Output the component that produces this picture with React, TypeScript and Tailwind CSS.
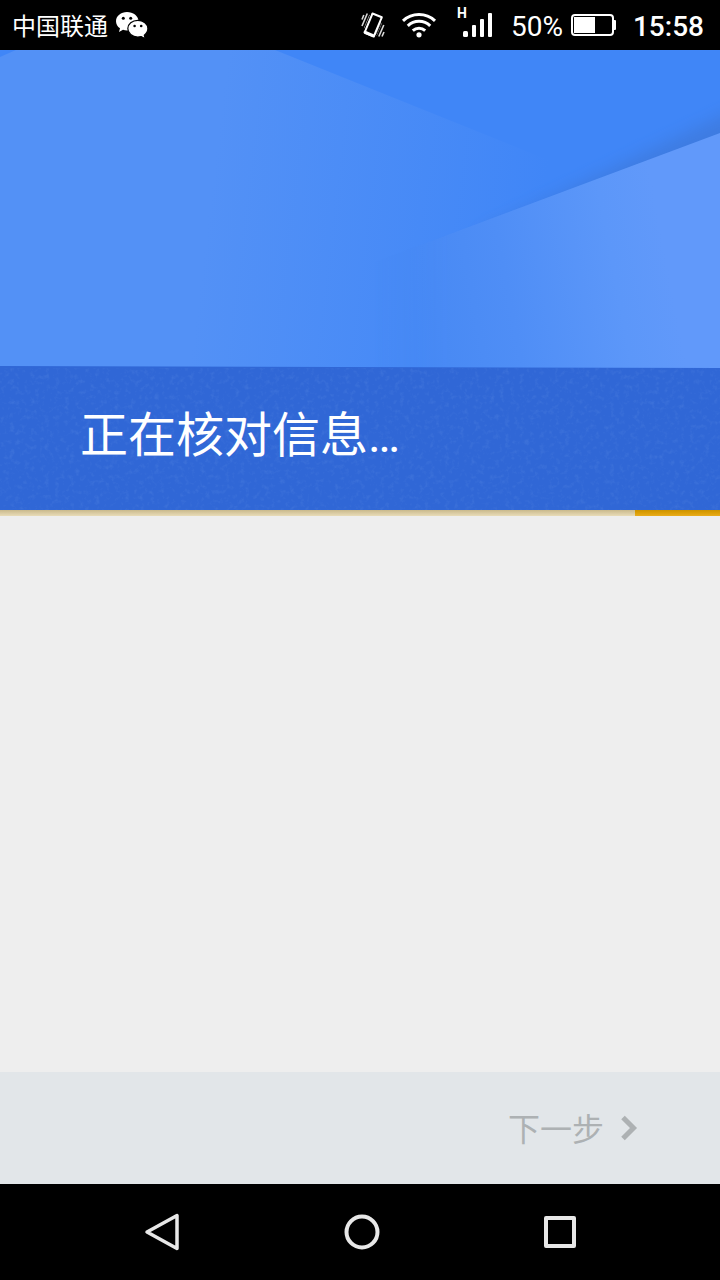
import { ReactNode } from "react";

function WeChatIcon() {
  return (
    <svg viewBox="0 0 32 28" className="h-7 w-8" aria-hidden="true">
      <path
        fill="#fff"
        d="M11 1C5 1 0 5 0 10.200c0 2.900 1.500 5.400 4 7.100L3 21l4-2.200c1.300.4 2.600.6 4 .6C17 19.400 22.500 15.500 22.500 10.200S17 1 11 1z"
      />
      <path
        fill="#fff"
        stroke="#000"
        strokeWidth="1.200"
        d="M21.800 9.400c-5.600 0-10 3.600-10 8.200s4.400 8.500 10 8.500c1.200 0 2.300-.2 3.400-.5l4.100 2.200-1-3.600c2.200-1.600 3.600-3.900 3.600-6.600 0-4.600-4.500-8.200-10.100-8.200z"
      />
      <circle cx="7.300" cy="7.200" r="1.500" />
      <circle cx="14.700" cy="7.200" r="1.500" />
      <circle cx="18.600" cy="15" r="1.300" />
      <circle cx="25.200" cy="15" r="1.300" />
    </svg>
  );
}

function VibrateIcon() {
  return (
    <svg viewBox="0 0 24 28" className="h-7 w-6" fill="none" stroke="#fff" aria-hidden="true">
      <path strokeWidth="2" strokeLinejoin="round" d="M11.500 2.500 20.800 6.300 12.800 25.500 3.500 21.500z" />
      <path strokeWidth="3" strokeLinecap="round" d="M4.500 21.500l7.500 3.200" />
      <path strokeWidth="1.600" d="M1 8.500 2.800 4M1 15 6.300 2.500M3.600 17.500 9 4M15 24.500l5.500-13M17.800 25.500l5-11.500M21 25.500l2-4.500" opacity="0.850" />
      <path stroke="#000" strokeWidth="1" d="M9.600 3.200 2.800 19.500M21.800 8.500 14.900 25" />
    </svg>
  );
}

function WifiIcon() {
  return (
    <svg viewBox="0 0 36 28" className="h-7 w-9" fill="none" stroke="#fff" aria-hidden="true">
      <path strokeWidth="3" d="M2 9.800c9-8.400 23-8.400 32 0" />
      <path strokeWidth="3" d="M6.800 14.800c6.300-6 16.100-6 22.400 0" />
      <path strokeWidth="3" d="M11.800 19.600c3.600-3.300 8.800-3.300 12.400 0" />
      <circle cx="18" cy="23.800" r="2.600" fill="#fff" stroke="none" />
    </svg>
  );
}

function SignalIcon() {
  return (
    <svg viewBox="0 0 32 28" className="h-7 w-8" fill="#fff" aria-hidden="true">
      <rect x="0" y="20" width="5" height="6" rx="1.500" />
      <rect x="9" y="14" width="4" height="12" rx="1" />
      <rect x="17" y="8" width="4" height="18" rx="1" />
      <rect x="25" y="2" width="4" height="24" rx="1" />
    </svg>
  );
}

function BatteryIcon() {
  return (
    <svg viewBox="0 0 46 24" className="h-6 w-[46px]" aria-hidden="true">
      <rect x="1" y="2" width="41" height="20" rx="3" fill="none" stroke="#fff" strokeWidth="2" />
      <rect x="3" y="4" width="21" height="16" fill="#fff" />
      <path d="M43 7h1a1 1 0 0 1 1 1v8a1 1 0 0 1-1 1h-1z" fill="#fff" />
    </svg>
  );
}

function StatusBar() {
  return (
    <div className="flex h-[50px] items-center justify-between bg-black pl-3 pr-4 text-white">
      <div className="flex items-center gap-2">
        <span className="pt-1 text-2xl">中国联通</span>
        <WeChatIcon />
      </div>
      <div className="flex items-center">
        <VibrateIcon />
        <div className="ml-4">
          <WifiIcon />
        </div>
        <div className="ml-5 flex items-center">
          <span className="-mr-1 pb-6 text-sm leading-none font-bold">H</span>
          <SignalIcon />
        </div>
        <span className="mr-2 ml-4 pt-1 text-[28px]">50%</span>
        <BatteryIcon />
        <span className="ml-4 pt-1 text-[28px] font-medium">15:58</span>
      </div>
    </div>
  );
}

/** Folded-paper artwork behind the setup title. */
function HeaderArt() {
  return (
    <svg
      viewBox="0 0 720 460"
      preserveAspectRatio="none"
      className="absolute inset-0 h-full w-full"
      aria-hidden="true"
    >
      <defs>
        <linearGradient id="leftFold" gradientUnits="userSpaceOnUse" x1="210" y1="150" x2="540" y2="190">
          <stop offset="0" stopColor="#5391f6" />
          <stop offset="1" stopColor="#5391f6" stopOpacity="0" />
        </linearGradient>
        <linearGradient id="rightFold" gradientUnits="userSpaceOnUse" x1="400" y1="250" x2="665" y2="200">
          <stop offset="0" stopColor="#4688f3" />
          <stop offset="0.400" stopColor="#4f8ef6" />
          <stop offset="0.800" stopColor="#5c97f9" />
          <stop offset="1" stopColor="#6199fa" />
        </linearGradient>
        <linearGradient id="rightEdge" gradientUnits="userSpaceOnUse" x1="375" y1="0" x2="450" y2="0">
          <stop offset="0" stopColor="#000" />
          <stop offset="1" stopColor="#fff" />
        </linearGradient>
        <mask id="rightMask" maskUnits="userSpaceOnUse" x="0" y="0" width="720" height="460">
          <rect width="720" height="460" fill="url(#rightEdge)" />
        </mask>
        <filter id="soft" x="-20%" y="-50%" width="140%" height="200%">
          <feGaussianBlur stdDeviation="8" />
        </filter>
        <filter id="grain" x="0" y="0" width="100%" height="100%">
          <feTurbulence type="fractalNoise" baseFrequency="0.2" numOctaves="3" seed="4" />
          <feColorMatrix values="0 0 0 0 0.3  0 0 0 0 0.5  0 0 0 0 0.9  1.200 0 0 0 -0.6" />
        </filter>
      </defs>
      <rect width="720" height="460" fill="#4086f7" />
      <path d="M0 7 16 0H275L700 171V317H0z" fill="url(#leftFold)" />
      <path d="M480 182 780 38V130L480 200z" fill="#3a66b4" opacity="0.320" filter="url(#soft)" />
      <path d="M720 83 370 214V320H720z" fill="url(#rightFold)" mask="url(#rightMask)" />
      <path d="M0 316 720 318V460H0z" fill="#3067d6" />
      <rect y="318" width="720" height="142" filter="url(#grain)" opacity="0.250" />
    </svg>
  );
}

function NavButton({ label, children }: { label: string; children: ReactNode }) {
  return (
    <button type="button" aria-label={label} className="flex h-12 w-12 items-center justify-center">
      <svg viewBox="0 0 40 40" className="h-10 w-10" fill="none" stroke="#e8e8e8" strokeWidth="4" strokeLinejoin="round">
        {children}
      </svg>
    </button>
  );
}

export default function App() {
  return (
    <div className="flex min-h-screen flex-col bg-[#eeeeee] font-[Roboto,'Noto_Sans_CJK_SC',sans-serif]">
      <StatusBar />

      <header className="relative flex h-[460px] flex-col justify-end">
        <HeaderArt />
        <h1 className="relative flex h-36 items-center px-20 pb-1 text-5xl text-white">正在核对信息…</h1>
      </header>

      <div role="progressbar" aria-label="正在核对信息" className="flex h-[6px]">
        <div className="flex-1 bg-linear-to-b from-[#c9b98c] to-[#e9dcb8]" />
        <div className="w-[85px] bg-linear-to-b from-[#cc9200] via-[#dc9f05] to-[#e9ac1a]" />
      </div>

      <main className="flex-1" />

      <footer className="flex h-28 items-center justify-end bg-[#e2e6e9] px-[82px]">
        <button type="button" disabled className="flex items-center gap-4 text-[32px] text-[#adb1b3]">
          <span className="pt-1">下一步</span>
          <svg viewBox="0 0 18 26" className="h-[26px] w-[18px]" fill="none" stroke="currentColor" strokeWidth="5" aria-hidden="true">
            <path d="M3 2.500 13.500 13 3 23.500" />
          </svg>
        </button>
      </footer>

      <nav className="flex h-24 items-center justify-between bg-black pl-[139px] pr-[136px]">
        <NavButton label="返回">
          <path d="M4 20 34 3.500V36.500z" strokeWidth="3.500" />
        </NavButton>
        <NavButton label="主屏幕">
          <circle cx="20" cy="20" r="15.500" />
        </NavButton>
        <NavButton label="最近任务">
          <rect x="6" y="6" width="28" height="28" />
        </NavButton>
      </nav>
    </div>
  );
}
